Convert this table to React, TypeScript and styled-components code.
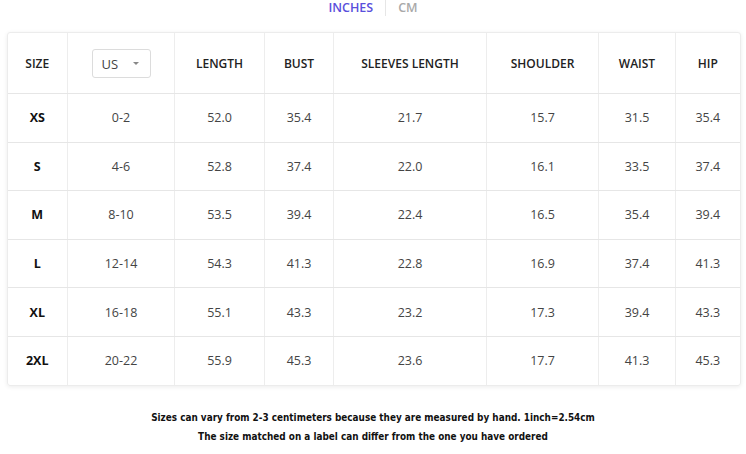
import React from "react";
import styled, { createGlobalStyle } from "styled-components";

const Global = createGlobalStyle`
  html, body { margin: 0; padding: 0; background: #fff; }
  body { font-family: "Open Sans", "Noto Sans", sans-serif; }
`;

const Page = styled.div`
  width: 746px;
  height: 454px;
  display: flex;
  flex-direction: column;
  align-items: center;
  background: #fff;
`;

const Tabs = styled.div`
  display: flex;
  align-items: center;
  height: 16px;
`;

const Tab = styled.div<{ $active?: boolean }>`
  font-size: 12.5px;
  line-height: 16px;
  padding: 0 12px;
  color: ${(p) => (p.$active ? "#5a4fdc" : "#a9a9a9")};
  font-weight: 600;
`;

const Sep = styled.div`
  width: 1px;
  height: 16px;
  background: #e6e6e6;
`;

const Card = styled.div`
  margin-top: 16px;
  width: 732px;
  margin-left: 1px;
  border: 1px solid #ececec;
  border-radius: 3px;
  box-shadow: 0 1px 4px rgba(0, 0, 0, 0.08);
  overflow: hidden;
`;

const Table = styled.table`
  width: 100%;
  border-collapse: collapse;
  table-layout: fixed;
`;

const HeadCell = styled.th`
  height: 59px;
  padding: 1px 0 0;
  font-size: 12px;
  font-weight: 600;
  color: #222;
  text-align: center;
  border-right: 1px solid #ededed;
  border-bottom: 1px solid #e6e6e6;
  &:last-child { border-right: none; }
`;

const Cell = styled.td<{ $bold?: boolean }>`
  height: 47.6px;
  padding: 0;
  font-size: 12.5px;
  font-weight: ${(p) => (p.$bold ? 700 : 400)};
  color: ${(p) => (p.$bold ? "#111" : "#444")};
  text-align: center;
  border-right: 1px solid #ededed;
  border-bottom: 1px solid #e6e6e6;
  &:last-child { border-right: none; }
  tr:last-child & { border-bottom: none; }
`;

const Select = styled.div`
  display: inline-flex;
  align-items: center;
  justify-content: space-between;
  box-sizing: border-box;
  width: 59px;
  height: 29px;
  padding: 0 11px 0 9px;
  border: 1px solid #dcdcdc;
  border-radius: 3px;
  font-size: 13px;
  font-weight: 400;
  color: #444;
`;

const Caret = styled.span`
  width: 0;
  height: 0;
  border-left: 3px solid transparent;
  border-right: 3px solid transparent;
  border-top: 3px solid #888;
`;

const Notes = styled.div`
  margin-top: 24px;
  display: flex;
  flex-direction: column;
  align-items: center;
  gap: 4px;
  font-family: "DejaVu Sans Condensed", "DejaVu Sans", sans-serif;
  font-weight: 700;
  font-size: 9.9px;
  line-height: 15px;
  color: #111;
`;

const widths = [60, 107, 90, 69, 153, 112, 77, 64];
const headers = ["SIZE", "", "LENGTH", "BUST", "SLEEVES LENGTH", "SHOULDER", "WAIST", "HIP"];
const rows = [
  ["XS", "0-2", "52.0", "35.4", "21.7", "15.7", "31.5", "35.4"],
  ["S", "4-6", "52.8", "37.4", "22.0", "16.1", "33.5", "37.4"],
  ["M", "8-10", "53.5", "39.4", "22.4", "16.5", "35.4", "39.4"],
  ["L", "12-14", "54.3", "41.3", "22.8", "16.9", "37.4", "41.3"],
  ["XL", "16-18", "55.1", "43.3", "23.2", "17.3", "39.4", "43.3"],
  ["2XL", "20-22", "55.9", "45.3", "23.6", "17.7", "41.3", "45.3"],
];

export default function App() {
  return (
    <Page>
      <Global />
      <Tabs>
        <Tab $active>INCHES</Tab>
        <Sep />
        <Tab>CM</Tab>
      </Tabs>
      <Card>
        <Table>
          <colgroup>
            {widths.map((w, i) => (
              <col key={i} style={{ width: w }} />
            ))}
          </colgroup>
          <thead>
            <tr>
              {headers.map((h, i) => (
                <HeadCell key={i}>
                  {i === 1 ? (
                    <Select>
                      US
                      <Caret />
                    </Select>
                  ) : (
                    h
                  )}
                </HeadCell>
              ))}
            </tr>
          </thead>
          <tbody>
            {rows.map((r) => (
              <tr key={r[0]}>
                {r.map((v, i) => (
                  <Cell key={i} $bold={i === 0}>
                    {v}
                  </Cell>
                ))}
              </tr>
            ))}
          </tbody>
        </Table>
      </Card>
      <Notes>
        <div>Sizes can vary from 2-3 centimeters because they are measured by hand. 1inch=2.54cm</div>
        <div>The size matched on a label can differ from the one you have ordered</div>
      </Notes>
    </Page>
  );
}
